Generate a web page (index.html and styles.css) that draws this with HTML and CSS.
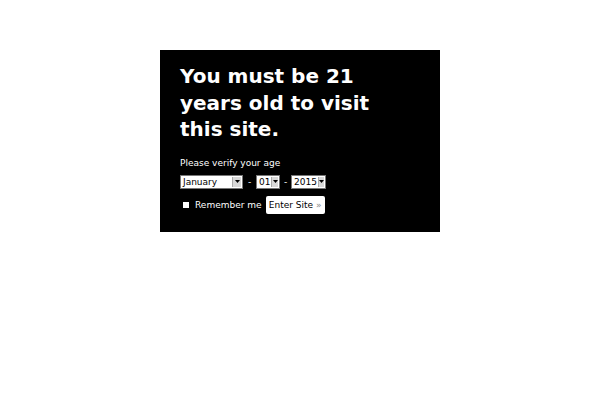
FILE: index.html
```html
<!DOCTYPE html>
<html>
<head>
<meta charset="utf-8">
<link rel="stylesheet" href="styles.css">
</head>
<body>
<div class="gate">
  <h1 class="title">You must be 21 years old to visit this site.</h1>
  <p class="prompt">Please verify your age</p>
  <div class="dates">
    <span class="sel sel-month"><span class="val">January</span><span class="arrow"><svg width="5" height="4" viewBox="0 0 5 4"><path d="M0 0H5L2.5 3Z" fill="#000"/></svg></span></span>
    <span class="dash">-</span>
    <span class="sel sel-day"><span class="val">01</span><span class="arrow"><svg width="5" height="4" viewBox="0 0 5 4"><path d="M0 0H5L2.5 3Z" fill="#000"/></svg></span></span>
    <span class="dash">-</span>
    <span class="sel sel-year"><span class="val">2015</span><span class="arrow"><svg width="5" height="4" viewBox="0 0 5 4"><path d="M0 0H5L2.5 3Z" fill="#000"/></svg></span></span>
  </div>
  <div class="actions">
    <span class="check"></span>
    <span class="remember">Remember me</span>
    <span class="enter">Enter Site <span class="raquo">»</span></span>
  </div>
</div>
</body>
</html>
```
FILE: styles.css
```css
html, body {
  margin: 0;
  padding: 0;
  background: #fff;
  font-family: "DejaVu Sans", sans-serif;
}
.gate {
  width: 220px;
  margin: 50px auto 0;
  background: #000;
  color: #fff;
  padding: 13px 40px 18px 20px;
}
.title {
  margin: 0;
  font-size: 20px;
  line-height: 26.5px;
  font-weight: bold;
}
.prompt {
  margin: 13px 0 0;
  font-size: 9px;
  line-height: 14px;
}
.dates {
  margin-top: 5.5px;
  display: flex;
  align-items: center;
  height: 14px;
  font-size: 9px;
}
.sel {
  display: flex;
  height: 14px;
  box-sizing: border-box;
  background: #fff;
  color: #000;
  border: 1px solid #777;
  align-items: stretch;
}
.val {
  flex: 1;
  padding-left: 2px;
  line-height: 12px;
  font-size: 9px;
}
.arrow {
  width: 8px;
  background: #d8d8d8;
  border-left: 1px solid #aaa;
  display: flex;
  align-items: center;
  justify-content: center;
  margin: 1px;
}
.sel-month { width: 63px; }
.sel-day { width: 24px; }
.sel-year { width: 35px; }
.dash {
  width: 13px;
  text-align: center;
  font-size: 9px;
}
.sel-day + .dash { width: 11px; }
.actions {
  margin-top: 7px;
  display: flex;
  align-items: center;
  height: 18px;
  font-size: 9px;
}
.check {
  width: 6px;
  height: 6px;
  background: #fff;
  margin-left: 3px;
  margin-right: 6px;
}
.remember {
  margin-right: 4px;
}
.enter {
  background: #fff;
  color: #000;
  border-radius: 2px;
  height: 18px;
  line-height: 18px;
  padding: 0 3px;
  width: 59px;
  text-align: center;
  box-sizing: border-box;
  white-space: nowrap;
}
.raquo { color: #888; }
```
